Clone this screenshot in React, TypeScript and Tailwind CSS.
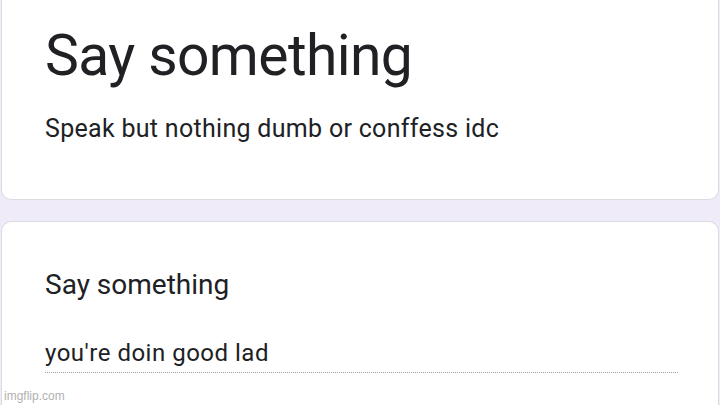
export default function App() {
  return (
    <div
      className="relative h-[405px] w-[720px] overflow-hidden bg-[#f0ebf8] text-[#202124]"
      style={{ fontFamily: 'Roboto, "Noto Sans", sans-serif' }}
    >
      {/* Form header card */}
      <div className="mx-px rounded-b-[10px] border-x border-b border-[#dadce0] bg-white pl-[43px] pt-[20px] pb-[54px]">
        <h1 className="text-[57px] leading-[72px] font-normal tracking-[-0.6px]">Say something</h1>
        <p className="mt-[21px] text-[25px] leading-[32px] tracking-[0.3px]">Speak but nothing dumb or conffess idc</p>
      </div>

      {/* Question card */}
      <div className="mx-px mt-[21px] h-[200px] rounded-t-[10px] border-x border-t border-[#dadce0] bg-white pl-[43px] pt-[45px]">
        <h2 className="text-[28px] leading-[36px] font-normal">Say something</h2>
        <div className="mt-[36px] w-[633px] border-b border-dotted border-[#9e9e9e] pb-1">
          <span className="text-[24px] leading-[28px] tracking-[0.5px]">you're doin good lad</span>
        </div>
      </div>

      {/* Watermark */}
      <span
        className="absolute bottom-[3px] left-[4px] text-[12px] leading-none text-[#b0b0b0]"
        style={{ fontFamily: '"Liberation Sans", Arial, sans-serif' }}
      >
        imgflip.com
      </span>
    </div>
  );
}
